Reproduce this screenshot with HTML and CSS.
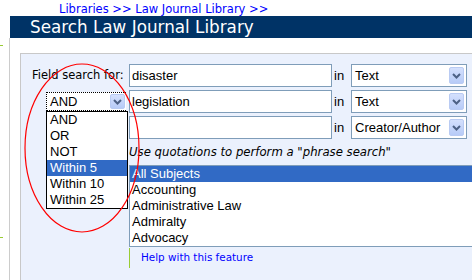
FILE: index.html
```html
<!DOCTYPE html>
<html>
<head>
<meta charset="utf-8">
<link rel="stylesheet" href="styles.css">
</head>
<body>
<div class="crumb"><a class="lnk">Libraries</a> <span class="sep">&gt;&gt;</span> <a class="lnk">Law Journal Library</a> <span class="sep">&gt;&gt;</span></div>
<div class="title">Search Law Journal Library</div>
<div class="main">
  <div class="nav"><span class="tick tick-top"></span><span class="tick tick-bottom"></span></div>
  <div class="content">
    <div class="panel">
      <div class="grid">
        <div class="label">Field search for:</div>
        <div class="field">disaster</div>
        <div class="in">in</div>
        <div class="sel"><span class="sel-text">Text</span><span class="arrow"><svg width="9" height="6" viewBox="0 0 9 6"><path d="M1 1 L4.5 4.5 L8 1" fill="none" stroke="#4d6185" stroke-width="2"/></svg></span></div>

        <div class="boolcell">
          <div class="boolsel">
            <span class="bool-text">AND</span>
            <span class="arrow"><svg width="9" height="6" viewBox="0 0 9 6"><path d="M1 1 L4.5 4.5 L8 1" fill="none" stroke="#4d6185" stroke-width="2"/></svg></span>
            <div class="droplist">
              <div class="opt">AND</div>
              <div class="opt">OR</div>
              <div class="opt">NOT</div>
              <div class="opt on">Within 5</div>
              <div class="opt">Within 10</div>
              <div class="opt">Within 25</div>
            </div>
          </div>
        </div>
        <div class="field">legislation</div>
        <div class="in">in</div>
        <div class="sel"><span class="sel-text">Text</span><span class="arrow"><svg width="9" height="6" viewBox="0 0 9 6"><path d="M1 1 L4.5 4.5 L8 1" fill="none" stroke="#4d6185" stroke-width="2"/></svg></span></div>

        <div class="blank"></div>
        <div class="field"></div>
        <div class="in">in</div>
        <div class="sel"><span class="sel-text">Creator/Author</span><span class="arrow"><svg width="9" height="6" viewBox="0 0 9 6"><path d="M1 1 L4.5 4.5 L8 1" fill="none" stroke="#4d6185" stroke-width="2"/></svg></span></div>

        <div class="blank"></div>
        <div class="hint">Use quotations to perform a "phrase search"</div>

        <div class="blank"></div>
        <div class="listbox">
          <div class="item on">All Subjects</div>
          <div class="item">Accounting</div>
          <div class="item">Administrative Law</div>
          <div class="item">Admiralty</div>
          <div class="item">Advocacy</div>
        </div>

        <div class="blank"></div>
        <div class="help"><a class="lnk">Help with this feature</a></div>
      </div>
    </div>
  </div>
</div>
<svg class="circle" width="118" height="172" viewBox="0 0 118 172"><ellipse cx="59" cy="86" rx="57" ry="84" fill="none" stroke="#ff0000" stroke-width="1.2"/></svg>
</body>
</html>
```
FILE: styles.css
```css
html, body {
  margin: 0;
  padding: 0;
  background: #ffffff;
  overflow: hidden;
}
body {
  width: 472px;
  height: 280px;
  position: relative;
  font-family: "DejaVu Sans", Verdana, sans-serif;
}
.lnk {
  color: #0000ff;
  text-decoration: none;
}
.crumb {
  height: 13px;
  padding-top: 3px;
  padding-left: 59px;
  font-size: 11.5px;
  line-height: 13px;
  color: #0000ff;
  white-space: nowrap;
}
.title {
  margin-left: 10px;
  height: 22px;
  background: #003366;
  color: #ffffff;
  padding-left: 20px;
  font-size: 16.8px;
  line-height: 22px;
  white-space: nowrap;
}
.main {
  display: flex;
  height: 242px;
}
.nav {
  width: 9px;
  border-right: 1px solid #cccccc;
  display: flex;
  flex-direction: column;
}
.tick {
  display: block;
  width: 3px;
  height: 1px;
  background: #99cc33;
}
.tick-top { margin-top: 7px; }
.tick-bottom { margin-top: 191px; }
.content {
  flex: 1;
  padding: 15px 0 0 10px;
}
.panel {
  background: #ebf1fd;
  border-top: 1px solid #c8c8c8;
  border-left: 1px solid #c8c8c8;
  height: 100%;
  padding-top: 10px;
  box-sizing: border-box;
}
.grid {
  display: grid;
  grid-template-columns: 108px 203px 19px 116px;
  row-gap: 3px;
  align-items: start;
}
.label {
  padding-left: 11px;
  font-size: 11.5px;
  line-height: 23px;
  color: #000;
  white-space: nowrap;
}
.field {
  height: 23px;
  box-sizing: border-box;
  border: 1px solid #7f9db9;
  background: #fff;
  padding-left: 2px;
  font-family: "Liberation Sans", Arial, sans-serif;
  font-size: 13px;
  line-height: 21px;
}
.in {
  font-family: "Liberation Sans", Arial, sans-serif;
  font-size: 13px;
  line-height: 23px;
  padding-left: 2px;
}
.sel {
  height: 23px;
  box-sizing: border-box;
  border: 1px solid #7f9db9;
  background: #fff;
  display: flex;
  align-items: center;
  justify-content: space-between;
  padding: 0 2px 0 3px;
  font-family: "Liberation Sans", Arial, sans-serif;
  font-size: 13px;
}
.arrow {
  width: 15px;
  height: 17px;
  box-sizing: border-box;
  border: 1px solid #b9cbf3;
  border-radius: 2px;
  background: linear-gradient(#d4e0fd, #b7cbf7);
  display: flex;
  align-items: center;
  justify-content: center;
}
.boolcell {
  padding-left: 25px;
  padding-top: 2px;
}
.boolsel {
  position: relative;
  width: 80px;
  height: 19px;
  box-sizing: border-box;
  border: 1px dotted #000;
  border-right: none;
  background: #fff;
  display: flex;
  align-items: center;
  justify-content: space-between;
  font-family: "Liberation Sans", Arial, sans-serif;
  font-size: 13px;
}
.bool-text { padding-left: 3px; }
.boolsel .arrow { height: 15px; margin-right: 1px; }
.droplist {
  position: absolute;
  left: -1px;
  top: 18px;
  width: 80px;
  background: #fff;
  border: 1px solid #000;
  z-index: 2;
}
.opt {
  height: 16px;
  line-height: 16px;
  padding-left: 3px;
  white-space: nowrap;
}
.opt.on, .item.on {
  background: #316ac5;
  color: #fff;
}
.blank { height: 1px; }
.hint {
  grid-column: span 3;
  height: 20px;
  font-style: italic;
  font-size: 11.7px;
  line-height: 20px;
  white-space: nowrap;
}
.listbox {
  grid-column: span 3;
  width: 360px;
  border: 1px solid #7f9db9;
  background: #fff;
  font-family: "Liberation Sans", Arial, sans-serif;
  font-size: 13px;
}
.item {
  height: 16px;
  line-height: 16px;
  padding-left: 2px;
  white-space: nowrap;
}
.help {
  grid-column: span 3;
  margin-top: -2px;
  height: 20px;
  border-left: 1px solid #99cc33;
  padding-left: 11px;
  font-size: 10.4px;
  line-height: 18px;
  white-space: nowrap;
}
.circle {
  position: absolute;
  left: 23px;
  top: 62px;
  z-index: 3;
}
```
